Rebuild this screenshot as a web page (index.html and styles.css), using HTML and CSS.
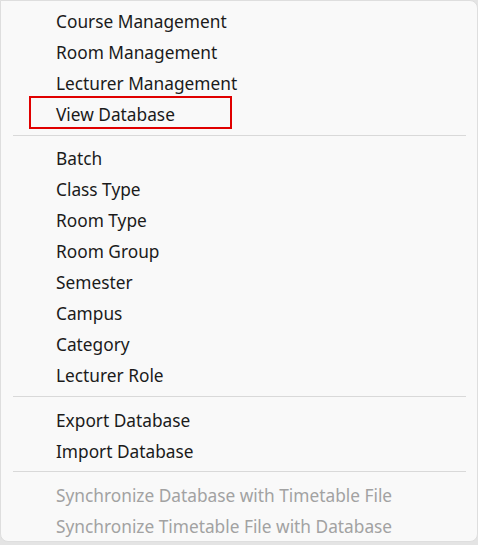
FILE: index.html
```html
<!DOCTYPE html>
<html>
<head>
<meta charset="utf-8">
<link rel="stylesheet" href="styles.css">
</head>
<body>
<div class="menu">
  <div class="group">
    <div class="item">Course Management</div>
    <div class="item">Room Management</div>
    <div class="item">Lecturer Management</div>
    <div class="item highlighted">View Database</div>
  </div>
  <div class="sep sep-first"></div>
  <div class="group">
    <div class="item">Batch</div>
    <div class="item">Class Type</div>
    <div class="item">Room Type</div>
    <div class="item">Room Group</div>
    <div class="item">Semester</div>
    <div class="item">Campus</div>
    <div class="item">Category</div>
    <div class="item">Lecturer Role</div>
  </div>
  <div class="sep"></div>
  <div class="group">
    <div class="item">Export Database</div>
    <div class="item">Import Database</div>
  </div>
  <div class="sep sep-last"></div>
  <div class="group">
    <div class="item disabled">Synchronize Database with Timetable File</div>
    <div class="item disabled">Synchronize Timetable File with Database</div>
  </div>
</div>
</body>
</html>
```
FILE: styles.css
```css
html, body {
  margin: 0;
  padding: 0;
}
body {
  background: #e4e4e4;
  width: 478px;
  height: 545px;
  overflow: hidden;
  font-family: "Noto Sans", "Open Sans", sans-serif;
}
.menu {
  box-sizing: border-box;
  width: 478px;
  height: 542px;
  background: #f9f9f9;
  border: 1px solid #dedede;
  border-radius: 0 8px 8px 8px;
  padding: 5px 0 4px 0;
}
.item {
  position: relative;
  height: 31px;
  line-height: 31px;
  padding-left: 55px;
  font-size: 17.3px;
  color: #1b1b1b;
  white-space: nowrap;
}
.item.disabled {
  color: #a2a2a2;
}
.item.highlighted::before {
  content: "";
  position: absolute;
  left: 28px;
  top: -3px;
  width: 203px;
  height: 33px;
  box-sizing: border-box;
  border: 2px solid #e00000;
}
.sep {
  height: 1px;
  background: #d9d9d9;
  margin: 5px 11px 8px 12px;
}
.sep-first {
  margin-bottom: 7px;
}
.sep-last {
  margin-top: 4px;
}
```
